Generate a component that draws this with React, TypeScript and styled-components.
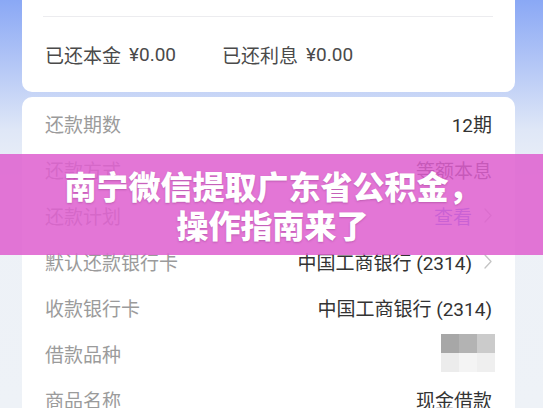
import React from "react";
import styled, { createGlobalStyle } from "styled-components";

const GlobalStyle = createGlobalStyle`
  html, body {
    margin: 0;
    padding: 0;
    width: 543px;
    height: 408px;
    overflow: hidden;
    background: linear-gradient(180deg, #8aa8f5 0px, #b7c9f6 70px, #dfe7f7 130px, #edf1f7 180px, #eef2f7 408px);
    font-family: Roboto, "Noto Sans CJK SC", sans-serif;
  }
`;

const Page = styled.div`
  position: relative;
  width: 543px;
  height: 408px;
  padding: 0 28px 0 22px;
  box-sizing: border-box;
  overflow: hidden;
`;

const SummaryCard = styled.div`
  background: #ffffff;
  border-radius: 0 0 10px 10px;
  padding: 16px 22px 0 21px;
`;

const Divider = styled.div`
  height: 1px;
  background: #ececef;
`;

const SummaryRow = styled.div`
  height: 75px;
  display: flex;
  align-items: center;
  gap: 46px;
  padding-left: 2px;
  font-size: 19px;
  color: #4a4a4a;
`;

const SummaryItem = styled.span`
  display: inline-flex;
  align-items: center;
  gap: 8px;
`;

const DetailCard = styled.div`
  margin-top: 5px;
  background: #ffffff;
  border-radius: 10px 10px 0 0;
  padding: 3px 23px 0 23px;
  height: 320px;
`;

const Row = styled.div`
  height: 46px;
  display: flex;
  align-items: center;
  justify-content: space-between;
  font-size: 19px;
`;

const Label = styled.span`
  color: #9b9b9b;
`;

const Value = styled.span<{ $link?: boolean }>`
  display: inline-flex;
  align-items: center;
  gap: 12px;
  color: ${(p) => (p.$link ? "#4a6ff0" : "#333333")};
`;

const Chevron = styled.svg`
  width: 8px;
  height: 15px;
  flex: none;
`;

const Mosaic = styled.div`
  display: grid;
  grid-template-columns: repeat(3, 18px);
  grid-template-rows: repeat(2, 19px);
  margin-right: -3px;
`;

const Cell = styled.div<{ $c: string }>`
  background: ${(p) => p.$c};
`;

const Banner = styled.div`
  position: absolute;
  left: 0;
  right: 0;
  top: 154px;
  height: 101px;
  background: rgba(222, 96, 207, 0.86);
  display: flex;
  flex-direction: column;
  align-items: center;
  justify-content: center;
`;

const Title = styled.div`
  font-family: "Noto Sans CJK SC", sans-serif;
  font-weight: 900;
  font-size: 32px;
  line-height: 39px;
  color: #ffffff;
  text-align: center;
  text-shadow: 0 1px 2px rgba(120, 40, 110, 0.35);
  padding-left: 2px;
`;

const Arrow = () => (
  <Chevron viewBox="0 0 8 15">
    <path d="M1 1 L7 7.5 L1 14" fill="none" stroke="#c4c4c4" strokeWidth="1.3" strokeLinecap="round" strokeLinejoin="round" />
  </Chevron>
);

const mosaic = ["#a7a7a7", "#b3b3b3", "#cbcbcb", "#ececec", "#f4f4f4", "#efefef"];

export default function App() {
  return (
    <>
      <GlobalStyle />
      <Page>
        <SummaryCard>
          <Divider />
          <SummaryRow>
            <SummaryItem>已还本金 <span>¥0.00</span></SummaryItem>
            <SummaryItem>已还利息 <span>¥0.00</span></SummaryItem>
          </SummaryRow>
        </SummaryCard>
        <DetailCard>
          <Row>
            <Label>还款期数</Label>
            <Value>12期</Value>
          </Row>
          <Row>
            <Label>还款方式</Label>
            <Value>等额本息</Value>
          </Row>
          <Row>
            <Label>还款计划</Label>
            <Value $link>
              查看
              <Arrow />
            </Value>
          </Row>
          <Row>
            <Label>默认还款银行卡</Label>
            <Value>
              中国工商银行 (2314)
              <Arrow />
            </Value>
          </Row>
          <Row>
            <Label>收款银行卡</Label>
            <Value>中国工商银行 (2314)</Value>
          </Row>
          <Row>
            <Label>借款品种</Label>
            <Mosaic>
              {mosaic.map((c, i) => (
                <Cell key={i} $c={c} />
              ))}
            </Mosaic>
          </Row>
          <Row>
            <Label>商品名称</Label>
            <Value>现金借款</Value>
          </Row>
        </DetailCard>
        <Banner>
          <Title>南宁微信提取广东省公积金，</Title>
          <Title>操作指南来了</Title>
        </Banner>
      </Page>
    </>
  );
}
